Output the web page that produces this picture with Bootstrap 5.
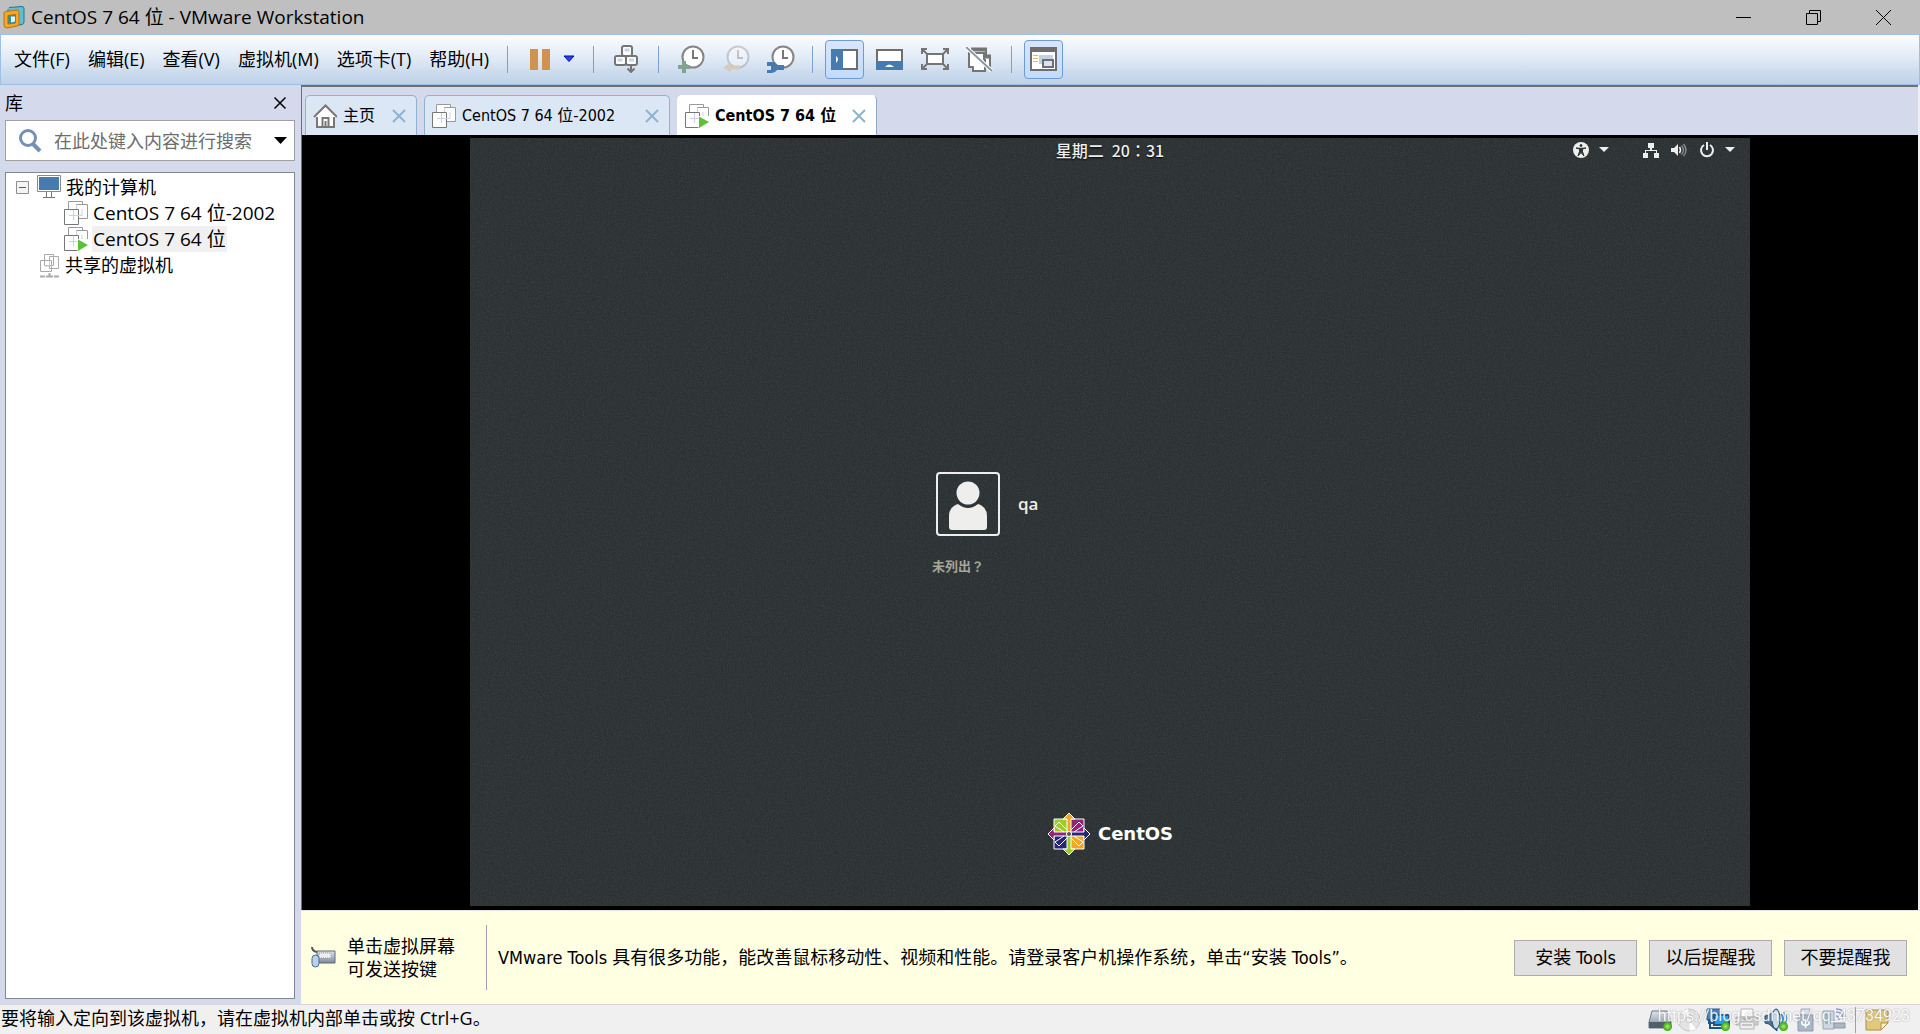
<!DOCTYPE html>
<html lang="zh-CN">
<head>
<meta charset="utf-8">
<meta name="viewport" content="width=device-width, initial-scale=1">
<title>CentOS 7 64 位 - VMware Workstation</title>
<link rel="stylesheet" href="https://cdn.jsdelivr.net/npm/bootstrap@5.3.0/dist/css/bootstrap.min.css">
<style>
  :root { --panel: #d4d9ec; --edge: #9dc0e8; }
  body { font-family: "Open Sans", "Noto Sans CJK SC", sans-serif; font-size: 18px; line-height: 26px; color: #000; background: #f0f0f0; }
  button { border: 0; background: none; padding: 0; color: inherit; }
  svg { display: block; flex: none; }
  .titlebar { height: 34px; background: #bfbfbf; padding: 0 2px 0 3px; }
  .titlebar h1 { font-size: 19px; line-height: 26px; font-weight: 400; margin: 0 auto 0 6px; }
  .caption-btn { width: 70px; height: 34px; display: grid; place-items: center; }
  .toolbar { height: 51px; border: 1px solid var(--edge); background: linear-gradient(#fbfdff, #dfe9f6 50%, #cddced 75%, #bdd2ec); padding: 0 0 1px 13px; }
  .menu-list { gap: 18px; margin-right: 6px; }
  .rule { width: 1px; height: 27px; background: #7ba2cf; flex: none; margin: 0 12px; }
  .rule-wide { margin: 0 18px; }
  .tool { width: 39px; height: 39px; display: grid; place-items: center; border: 1px solid transparent; border-radius: 4px; }
  .tool.on { border-color: #6d9bd4; background: linear-gradient(#d8e6fa, #c2dbfd); }
  .view-tools { gap: 6px; }
  .library { width: 301px; background: var(--panel); padding: 0 6px 5px 5px; flex: none; }
  .library-head { height: 35px; }
  .search { height: 41px; border: 1px solid #a0a0a0; background: #fff; margin-bottom: 11px; padding: 0 6px 0 13px; }
  .search input { border: 0; outline: 0; flex: 1; min-width: 0; margin-left: 12px; padding: 0; background: none; }
  .search input::placeholder { color: #6d6d6d; opacity: 1; }
  .tree { border: 1px solid #828790; background: #fff; padding: 1px 0 0 10px; }
  .tree ul { list-style: none; margin: 0; padding: 0; }
  .tree .branch { padding-left: 48px; font-size: 19px; }
  .tree-row { height: 26px; }
  .tree-row button { height: 26px; padding: 0 1px; white-space: nowrap; }
  .tree-row .toggle { padding: 0; }
  .tree-row .picked { background: #f0f0f0; }
  .workspace { min-width: 0; background: var(--panel); border: 2px solid #6f6f6f; border-width: 2px 0 0 1px; margin-right: 2px; }
  .tabs { height: 48px; padding-left: 3px; gap: 7px; font: 16px/24px "DejaVu Sans Condensed", "Noto Sans CJK SC", sans-serif; }
  .vm-tab { height: 40px; border: 1px solid #8fb3d1; border-bottom: 0; border-radius: 5px 5px 0 0; background: #dbe7f5; padding: 0 10px 0 7px; }
  .vm-tab.current { background: #fff; border-color: #fff #8fa9c4 #fff #fff; font-weight: 700; }
  .vm-tab svg + button { margin: 0 auto 0 6px; }
  .tab-home { width: 112px; } .tab-other { width: 246px; } .tab-cur { width: 200px; }
  .tab-close { color: #8eb2cf; }
  .stage { background: #000; padding: 3px 0 4px; }
  .guest { width: 100%; max-width: 1280px; background: #2b3133; color: #eeeeec; position: relative; overflow: hidden; font-family: "Noto Sans CJK TC", sans-serif; }
  .grain { position: absolute; inset: 0; width: 100%; height: 100%; opacity: .12; }
  .guest-bar { height: 24px; display: grid; grid-template-columns: 1fr auto 1fr; align-items: center; font-size: 16px; line-height: 24px; font-weight: 500; position: relative; text-shadow: 0 1px 2px #000; }
  .guest-tray { padding-right: 13px; }
  .login-area { padding-top: 75px; }
  .login { width: 356px; gap: 18px; position: relative; }
  .avatar { width: 64px; height: 64px; border: 2px solid #eeeeec; border-radius: 4px; }
  .user-btn { gap: 18px; padding-left: 4px; font: 600 17px/24px "Open Sans", sans-serif; }
  .unlisted { font-size: 13px; line-height: 24px; font-weight: 700; color: #a5a598; }
  .brand { gap: 7px; position: relative; padding-bottom: 50px; font: 700 18px/24px "DejaVu Sans", sans-serif; color: #fff; }
  .notice { min-height: 94px; background: #ffffe1; border-top: 1px solid #e5e5e5; padding: 0 13px 0 10px; font-family: "DejaVu Sans Condensed", "Noto Sans CJK SC", sans-serif; line-height: 23px; }
  .notice-rule { width: 1px; height: 65px; background: #a0a0a8; margin-left: 31px; }
  .notice p { margin: 0 0 0 11px; }
  .notice-btn { width: 123px; height: 36px; background: #e1e1e1; border: 1px solid #adadad; }
  .statusbar { height: 30px; border-top: 1px solid #d7d7d7; background: #f0f0f0; position: relative; padding: 0 31px 0 1px; }
  .status-text { line-height: 24px; padding-bottom: 3px; }
  .status-icons { gap: 5px; }
  .status-rule { width: 1px; height: 26px; background: #a0a0a0; }
  .watermark { position: absolute; right: 10px; top: 0; font: 16px/22px Roboto, sans-serif; color: #fff; opacity: .85; text-shadow: 0 0 2px #888; pointer-events: none; }
</style>
<script src="https://cdn.jsdelivr.net/npm/bootstrap@5.3.0/dist/js/bootstrap.bundle.min.js"></script>
</head>
<body class="min-vh-100 d-flex flex-column">

<svg width="0" height="0" class="position-absolute" aria-hidden="true">
  <defs>
    <linearGradient id="steel" x1="0" y1="0" x2="0" y2="1"><stop offset="0" stop-color="#dfe5ec"/><stop offset="1" stop-color="#7b8a9c"/></linearGradient>
    <radialGradient id="led"><stop offset="0" stop-color="#a6ee62"/><stop offset="1" stop-color="#35a317"/></radialGradient>
    <symbol id="vm" viewBox="0 0 24 24">
      <g fill="#fff" stroke="#9a9a9a"><path d="M4.500.5h14v14h-14z"/><path d="M12.500 3.500h11v14h-11z"/><path d="M.5 8.500h14v15h-14z" stroke="#777"/></g>
      <path d="M12.500 4v4M18 8v6.500M5 14.500h13M9.500 9v10" stroke="#c9d0ea" fill="none"/>
    </symbol>
    <symbol id="vm-on" viewBox="0 0 24 24"><use href="#vm" width="24" height="24"/><path d="M13.500 12v13H24V12z" fill="#fff"/><path d="M14 12.500 24 18l-10 6z" fill="#5cc03c"/></symbol>
    <symbol id="clock" viewBox="0 0 28 28"><circle cx="16" cy="12" r="10.500" fill="#fff" stroke="#858585" stroke-width="2"/><path d="M16 5v8h5" fill="none" stroke="#777" stroke-width="2"/></symbol>
    <symbol id="x" viewBox="0 0 14 14"><path d="M1 1l12 12M13 1L1 13" fill="none" stroke="currentColor" stroke-width="2"/></symbol>
  </defs>
</svg>

<header class="titlebar d-flex align-items-center">
  <svg width="22" height="24" viewBox="0 0 22 24"><path d="M6 2.500 19 1.500q2 0 2 2V17q0 2-2 2.500l-12 2q-2 0-2-2V4" fill="#62bdd2" stroke="#24748d"/><path d="M2.500 6.500 14 5q2 0 2 2v12q0 2-2 2L4 23q-3 0-3-3V8q0-1 1.500-1.500z" fill="#f5a623" stroke="#b97412"/><path d="M5 10.500l7.500-1v8.500l-7.500 1z" fill="#2a8fb0" stroke="#b06d0c"/><path d="M8 11.500h4v5l-4 1z" fill="#e8f6fa"/></svg>
  <h1>CentOS 7 64 位 - VMware Workstation</h1>
  <button class="caption-btn" aria-label="最小化"><svg width="15" height="15"><path d="M0 7.500h15" stroke="#000"/></svg></button>
  <button class="caption-btn" aria-label="还原"><svg width="15" height="15" fill="none" stroke="#000"><path d="M.5 3.500h11v11H.5zM3.500 3V.5h11v11H12"/></svg></button>
  <button class="caption-btn" aria-label="关闭"><svg width="15" height="15" stroke="#000"><path d="M0 0l15 15M15 0L0 15"/></svg></button>
</header>

<nav class="toolbar d-flex align-items-center">
  <div class="menu-list d-flex text-nowrap">
    <button>文件(F)</button><button>编辑(E)</button><button>查看(V)</button><button>虚拟机(M)</button><button>选项卡(T)</button><button>帮助(H)</button>
  </div>
  <div class="d-flex align-items-center">
    <span class="rule"></span>
    <button class="tool me-1" aria-label="挂起"><svg width="20" height="21" fill="#d1914f"><path d="M0 0h8v21H0zM12 0h8v21h-8z"/></svg></button>
    <button aria-label="电源选项"><svg width="12" height="8"><path d="M1 1h10L6 6.500z" fill="#2a3cff" stroke="#00108a"/></svg></button>
    <span class="rule rule-wide"></span>
    <button aria-label="发送 Ctrl+Alt+Del"><svg width="28" height="28" fill="#fff" stroke="#757575" stroke-width="2"><rect x="10" y="1" width="10" height="10" rx="2"/><rect x="3" y="11" width="11" height="9" rx="2"/><rect x="14" y="11" width="11" height="9" rx="2"/><path d="M12.500 5h5M5.500 15h5M17 15h5" stroke="#c6d3e8" stroke-width="3"/><path d="M19 21v6M15.500 23.500l3.500 3.500 3.500-3.500" fill="none"/></svg></button>
    <span class="rule rule-wide"></span>
    <button class="me-3" aria-label="拍摄快照"><svg width="29" height="28"><use href="#clock" width="28" height="28"/><path d="M5 16h4v4h4v4H9v4H5v-4H1v-4h4z" fill="#84a294"/></svg></button>
    <button class="me-3" aria-label="恢复快照"><svg width="29" height="28"><g opacity=".35"><use href="#clock" width="28" height="28"/></g><path d="M1 22.500l8-5v3h9v4H9v3z" fill="#d6cabd"/></svg></button>
    <button class="me-1" aria-label="管理快照"><svg width="29" height="28"><use href="#clock" width="28" height="28"/><path d="M0 17h5q4 0 5 3h7v5h-7q-2 3-5 3H0v-3h4v-4H0z" fill="#477bb0"/></svg></button>
    <span class="rule"></span>
    <div class="view-tools d-flex">
    <button class="tool on" aria-label="显示库"><svg width="27" height="21"><path d="M1 1h25v19H1z" fill="#fff" stroke="#6e6e6e" stroke-width="2"/><path d="M0 0h12v21H0z" fill="#477bb0"/><path d="M5 7q4 3 0 7z" fill="#fff"/></svg></button>
    <button class="tool" aria-label="缩略图栏"><svg width="27" height="21"><path d="M1 1h25v19H1z" fill="#fff" stroke="#6e6e6e" stroke-width="2"/><path d="M0 12h27v9H0z" fill="#477bb0"/><path d="M9 18q4-5 9 0z" fill="#fff"/></svg></button>
    <button class="tool" aria-label="全屏"><svg width="28" height="22" fill="none" stroke="#757575" stroke-width="2"><path d="M6 6h16v10H6z" fill="#fff"/><path d="M1 6V1h5M22 1h5v5M1 16v5h5M22 21h5v-5M1 1l5 5M27 1l-5 5M1 21l5-5M27 21l-5-5"/></svg></button>
    <button class="tool" aria-label="Unity"><svg width="27" height="25" fill="#fff" stroke="#757575" stroke-width="2"><path d="M6 2h14v9H6z"/><path d="M12 9h12v11H12z"/><path d="M3 6h15v14H3z"/><path d="M7 20v4h12V12"/><path d="M5 2.500h16M18 9.500h7" stroke-width="4"/><path d="M0 0l26 24" stroke="#fff" stroke-width="4"/><path d="M0 0l26 24" stroke="#8998a2"/></svg></button>
    </div>
    <span class="rule"></span>
    <button class="tool on" aria-label="控制台视图"><svg width="27" height="24"><path d="M1 1h25v22H1z" fill="#fff" stroke="#6e6e6e" stroke-width="2"/><path d="M0 0h27v5H0z" fill="#6e6e6e"/><path d="M3 8.500h5M3 11.500h5M3 14.500h5" stroke="#e2b767"/><path d="M9 8h14v9H9z" fill="#c5d1e3"/><path d="M13 13h10v7H13z" fill="#d9e3f2" stroke="#6e6e6e" stroke-width="2"/></svg></button>
  </div>
</nav>

<main class="d-flex flex-grow-1">
  <aside class="library d-flex flex-column">
    <div class="library-head d-flex align-items-center justify-content-between pe-2">
      <span>库</span><button aria-label="关闭库"><svg width="14" height="14" stroke="#000"><path d="M1.500 1.500l11 11M12.500 1.500l-11 11" stroke-width="1.500"/></svg></button>
    </div>
    <div class="search d-flex align-items-center">
      <svg width="23" height="24" fill="none" stroke="#7590b6"><circle cx="9" cy="9" r="7.500" stroke-width="3"/><path d="M14 15l7 7" stroke-width="4"/></svg>
      <input type="text" placeholder="在此处键入内容进行搜索" aria-label="搜索">
      <button aria-label="搜索选项"><svg width="15" height="8"><path d="M1 0h13L7.500 7z"/></svg></button>
    </div>
    <div class="tree flex-grow-1">
      <ul>
        <li>
          <div class="tree-row d-flex align-items-center">
            <button class="toggle" aria-label="折叠"><svg width="13" height="13"><path d="M.5.5h12v12H.5z" fill="#f4f4f4" stroke="#8e8e8e"/><path d="M3 6.500h7" stroke="#3c5aa8"/></svg></button>
            <svg class="ms-2 me-1" width="24" height="24"><path d="M.5.5h23v16H.5z" fill="#fff" stroke="#8a8a8a"/><path d="M2 2h20v13H2z" fill="#477bb0"/><path d="M9.500 17v5M14.500 17v5M6 22.500h12" stroke="#777" fill="none"/></svg>
            <button>我的计算机</button>
          </div>
          <ul class="branch">
            <li class="tree-row d-flex align-items-center"><svg width="24" height="24" class="me-1"><use href="#vm"/></svg><button>CentOS 7 64 位-2002</button></li>
            <li class="tree-row d-flex align-items-center"><svg width="24" height="24" class="me-1"><use href="#vm-on"/></svg><button class="picked">CentOS 7 64 位</button></li>
          </ul>
        </li>
        <li class="tree-row d-flex align-items-center ps-4">
          <svg class="me-1" width="20" height="25" fill="#fff" stroke="#aaa"><path d="M4.500 1.500h9v11h-9zM9.500 3.500h9v12h-9zM.5 7.500h11v11H.5z"/><path d="M9.500 8v4M4 13h8" stroke="#c9d0ea"/><path d="M0 23.500h5M6 23.500h7M14 23.500h5M9.500 20v4" stroke-width="2"/></svg>
          <button>共享的虚拟机</button>
        </li>
      </ul>
    </div>
  </aside>

  <div class="d-flex flex-column flex-grow-1">
    <section class="workspace d-flex flex-column flex-grow-1">
      <div class="tabs d-flex align-items-end">
        <div class="vm-tab tab-home d-flex align-items-center">
          <svg width="24" height="24" fill="#fff" stroke="#777"><path d="M4 11v12h17V11" stroke-width="2"/><path d="M1 13L12.500 1.500 24 13" stroke-width="2"/><path d="M9.500 23v-9h6v9M12.500 23v-6" stroke-width="2" fill="none"/></svg>
          <button>主页</button><button class="tab-close" aria-label="关闭主页"><svg width="14" height="14"><use href="#x"/></svg></button>
        </div>
        <div class="vm-tab tab-other d-flex align-items-center">
          <svg width="24" height="24"><use href="#vm"/></svg>
          <button>CentOS 7 64 位-2002</button><button class="tab-close" aria-label="关闭 CentOS 7 64 位-2002"><svg width="14" height="14"><use href="#x"/></svg></button>
        </div>
        <div class="vm-tab current tab-cur d-flex align-items-center">
          <svg width="24" height="24"><use href="#vm-on"/></svg>
          <button class="fw-bold">CentOS 7 64 位</button><button class="tab-close" aria-label="关闭 CentOS 7 64 位"><svg width="14" height="14"><use href="#x"/></svg></button>
        </div>
      </div>
      <div class="stage d-flex flex-grow-1 justify-content-center">
        <div class="guest d-flex flex-column align-items-stretch" lang="zh-TW">
          <svg class="grain"><filter id="noise"><feTurbulence type="fractalNoise" baseFrequency=".7" numOctaves="2" seed="4"/><feColorMatrix values="0 0 0 0 .5 0 0 0 0 .55 0 0 0 0 .55 1.500 0 0 0 -.5"/></filter><rect width="100%" height="100%" filter="url(#noise)"/></svg>
          <div class="guest-bar">
            <span></span><span>星期二&ensp;20：31</span>
            <div class="guest-tray d-flex align-items-center justify-content-end">
              <svg width="16" height="16"><circle cx="8" cy="8" r="8" fill="#eeeeec"/><g fill="#2e3436" stroke="#2e3436"><circle cx="8" cy="3.500" r="1"/><path d="M3 6l3.500 1v2.500L5 14l3-3.500 3 3.500-1.500-4.500V7L13 6 8 6.300z"/></g></svg>
              <svg class="ms-2 me-2" width="14" height="6" fill="#eeeeec"><path d="M2 0h10L7 5z"/></svg>
              <svg class="ms-4 me-2" width="16" height="16" fill="#eeeeec"><path d="M5 1h6v5H9v2h5v3h2v5h-5v-5h2V9H3v2h2v5H0v-5h2V8h5V6H5z"/></svg>
              <svg class="ms-1 me-2" width="16" height="14" fill="none" stroke="#eeeeec"><path d="M0 5h3l4-4v12L3 9H0z" fill="#eeeeec" stroke="none"/><path d="M8.500 4q2 3 0 6" stroke-width="1.500"/><path d="M10.500 2.500q4 4.500 0 9M12.500 1q5 6 0 12" stroke-width="1.500" opacity=".45"/></svg>
              <svg class="ms-1 me-2" width="16" height="16" fill="none" stroke="#eeeeec" stroke-width="2"><path d="M5 3a6 6 0 1 0 6 0M8 0v8"/></svg>
              <svg width="14" height="6" fill="#eeeeec"><path d="M2 0h10L7 5z"/></svg>
            </div>
          </div>
          <div class="login-area flex-grow-1 d-flex justify-content-center align-items-center">
            <div class="login d-flex flex-column align-items-start">
              <button class="user-btn d-flex align-items-center"><span class="avatar"><svg width="60" height="60" fill="#eeeeec"><circle cx="30" cy="19" r="11.500"/><path d="M20 30q10 8 20 0 9 3 9 12v11q0 3-3 3H14q-3 0-3-3V42q0-9 9-12z"/></svg></span>qa</button>
              <button class="unlisted">未列出？</button>
            </div>
          </div>
          <div class="brand d-flex justify-content-center align-items-center">
            <svg width="44" height="44" viewBox="-22 -22 44 44" stroke="#fff">
              <path d="M-15-15H0V0h-15z" fill="#9ccd2a"/><path d="M0-15h15V0H0z" fill="#932279"/><path d="M0 0h15v15H0z" fill="#efa724"/><path d="M-15 0H0v15h-15z" fill="#262577"/>
              <path d="M0-21l6 6-4 0V-2h-4v-13h-4z" fill="#efa724"/><path d="M21 0l-6 6V2H2v-4h13v-4z" fill="#262577"/><path d="M0 21l-6-6h4V2h4v13h4z" fill="#9ccd2a"/><path d="M-21 0l6-6v4h13v4h-13v4z" fill="#932279"/>
              <path d="M-2-4L-10-12L-14-8L-5-2M2-4L10-12L14-8L5-2M-2 4L-10 12L-14 8L-5 2M2 4L10 12L14 8L5 2" fill="none"/>
              <circle r="2.500" fill="#555"/>
            </svg>
            <span>CentOS</span>
          </div>
        </div>
      </div>
    </section>
    <section class="notice d-flex align-items-center">
      <svg width="25" height="22"><path d="M6 4h18v12H6z" fill="url(#steel)" stroke="#5b6b7c"/><path d="M8 6h12v5H8z" fill="#eee" stroke="#999" stroke-dasharray="1"/><path d="M1 0q0 4 5 5" fill="none" stroke="#555" stroke-width="2"/><rect x="1" y="8" width="7" height="12" rx="3.500" fill="#b9d2ec" stroke="#50698a"/></svg>
      <p>单击虚拟屏幕<br>可发送按键</p>
      <span class="notice-rule"></span>
      <p class="me-auto">VMware Tools 具有很多功能，能改善鼠标移动性、视频和性能。请登录客户机操作系统，单击“安装 Tools”。</p>
      <div class="d-flex gap-2 text-nowrap">
        <button class="notice-btn me-1">安装 Tools</button><button class="notice-btn me-1">以后提醒我</button><button class="notice-btn">不要提醒我</button>
      </div>
    </section>
  </div>
</main>

<footer class="statusbar d-flex align-items-center justify-content-between">
  <span class="status-text">要将输入定向到该虚拟机，请在虚拟机内部单击或按 Ctrl+G。</span>
  <div class="status-icons d-flex align-items-center">
    <svg width="24" height="24"><path d="M4 3h15l4 11v6H1v-6z" fill="url(#steel)" stroke="#6d7987"/><path d="M1 14h22v6H1z" fill="#525d6b"/><circle cx="19.500" cy="18.500" r="4.500" fill="url(#led)"/></svg>
    <svg width="24" height="24"><circle cx="12" cy="12" r="11" fill="#e3e3e5" stroke="#c8c8ca"/><path d="M12 12L5 3l6-2zM12 12l7 9-6 2z" fill="#fff"/><circle cx="12" cy="12" r="3" fill="#f7f7f7" stroke="#ccc"/></svg>
    <svg width="24" height="24"><path d="M1 1h13v11H1z" fill="#3f86bb" stroke="#245c86"/><path d="M3 12h8v3H3zM4 12v8h8" fill="none" stroke="#1a5686" stroke-width="2"/><path d="M8 7h15v10H8z" fill="#229cf2" stroke="#1a5686" stroke-width="2"/><path d="M9 20h10" stroke="#1a5686" stroke-width="2"/><circle cx="19.500" cy="18.500" r="4.500" fill="url(#led)"/></svg>
    <svg width="24" height="24" stroke="#b4b4b4"><path d="M6 1h12v8H6z" fill="#fff"/><path d="M1 9h22v8H1z" fill="#cfcfcf"/><path d="M5 14h14v7H5z" fill="#eee"/><path d="M7 17h10M7 11h10" stroke="#999"/></svg>
    <svg width="24" height="24"><path d="M1 8l4-1 8-6v22l-8-7-4-1z" fill="#47779f" stroke="#274c6c"/><ellipse cx="12" cy="11" rx="4" ry="10" fill="#c9dcea" stroke="#274c6c"/><path d="M17 6q4 5 0 10M20 4q4 6 1 11" fill="none" stroke="#3a8fd0" stroke-width="2"/><circle cx="19.500" cy="18.500" r="4.500" fill="url(#led)"/></svg>
    <svg width="24" height="24"><path d="M8 1h9v7H8z" fill="#dde1e7" stroke="#a5adb8"/><path d="M5 7h15v16H5z" fill="#a9b7c9" stroke="#8d9bad"/><path d="M12.500 20v-9M9 13v3l3.500 2 3.500-2v-3" fill="none" stroke="#fff" stroke-width="1.500"/></svg>
    <svg width="24" height="24"><path d="M1 3h11v18H1z" fill="#cdd8e2" stroke="#98a7b5"/><path d="M3 5h6v11H3z" fill="#9fb6c9"/><path d="M12 15h11v5H12z" fill="#aeb7c1" stroke="#8e99a5"/><path d="M14 8q3 0 3 4M14 4q7 0 7 7M14 1q9 0 9 9" fill="none" stroke="#88a1ca" stroke-width="1.500"/></svg>
    <span class="status-rule mx-1"></span>
    <svg width="24" height="24"><path d="M1 2h22v13l-7 7H1z" fill="#e3c879" stroke="#a98f4e"/><path d="M23 15h-7v7z" fill="#fbf0c8" stroke="#a98f4e"/></svg>
  </div>
  <span class="watermark">https://blog.csdn.net/qq_43734923</span>
</footer>
</body>
</html>
